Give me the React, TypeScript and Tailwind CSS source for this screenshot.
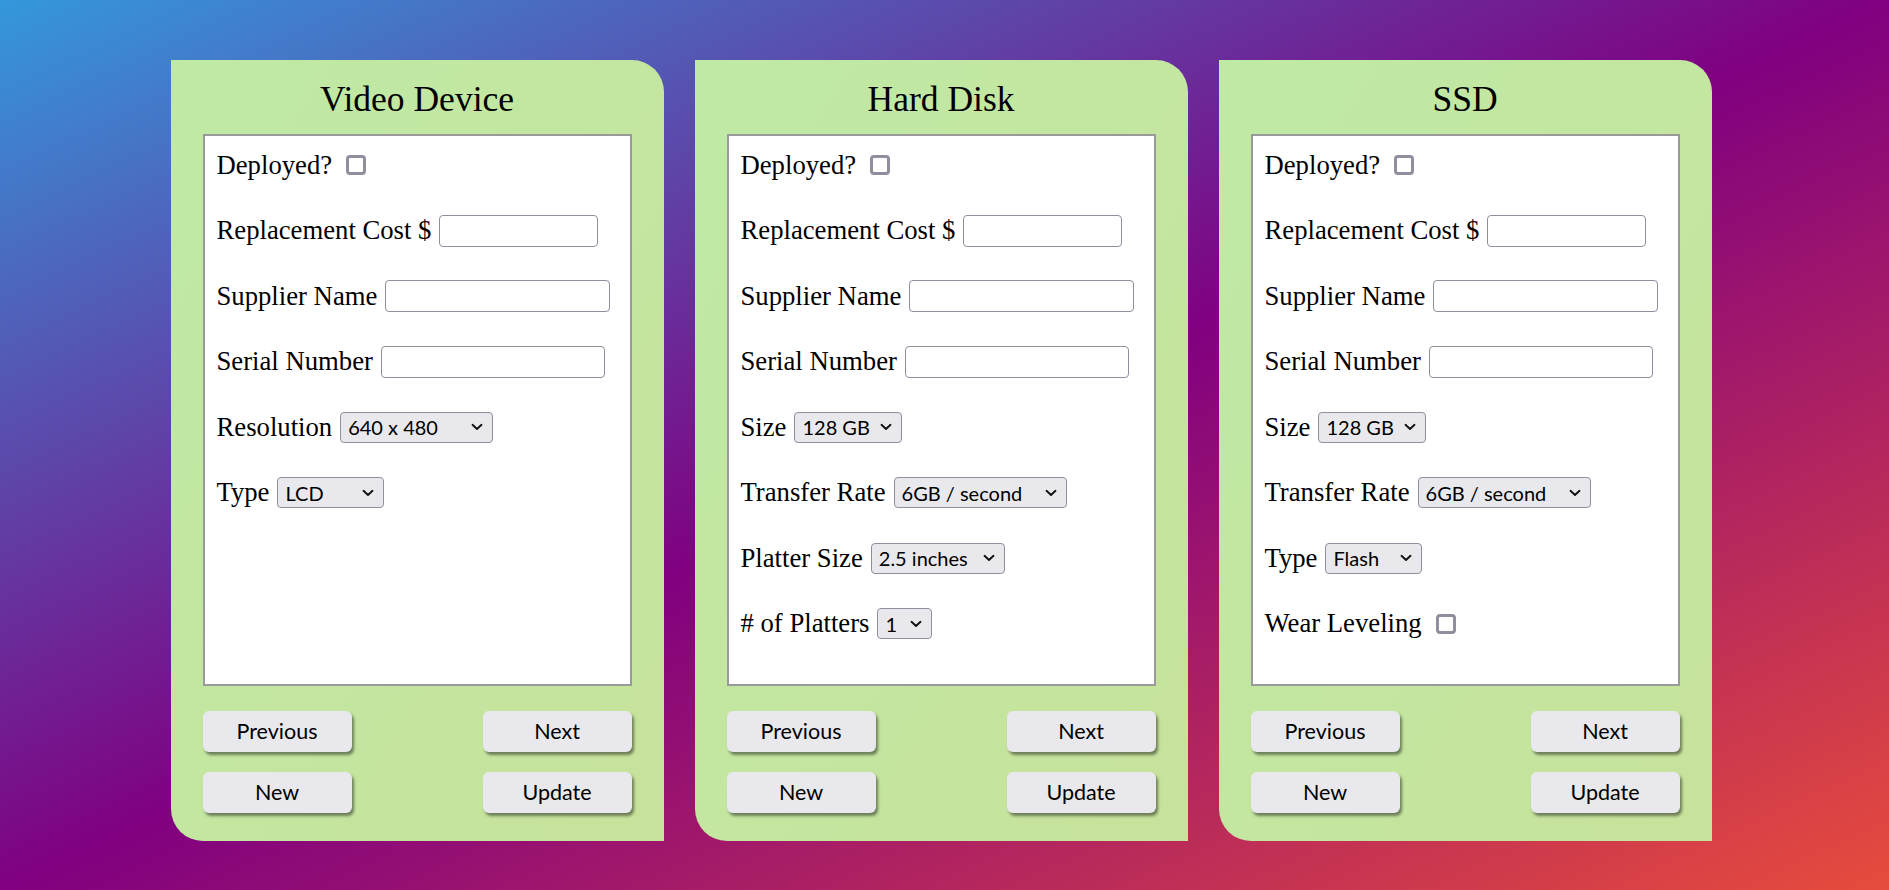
import { ReactNode } from "react";

type Field =
  | { kind: "check"; label: string }
  | { kind: "text"; label: string; width: number }
  | { kind: "select"; label: string; value: string; width: number };

type Card = { title: string; fields: Field[] };

const common: Field[] = [
  { kind: "check", label: "Deployed?" },
  { kind: "text", label: "Replacement Cost $", width: 159 },
  { kind: "text", label: "Supplier Name", width: 225 },
  { kind: "text", label: "Serial Number", width: 224 },
];

const cards: Card[] = [
  {
    title: "Video Device",
    fields: [
      ...common,
      { kind: "select", label: "Resolution", value: "640 x 480", width: 153 },
      { kind: "select", label: "Type", value: "LCD", width: 107 },
    ],
  },
  {
    title: "Hard Disk",
    fields: [
      ...common,
      { kind: "select", label: "Size", value: "128 GB", width: 108 },
      { kind: "select", label: "Transfer Rate", value: "6GB / second", width: 173 },
      { kind: "select", label: "Platter Size", value: "2.5 inches", width: 134 },
      { kind: "select", label: "# of Platters", value: "1", width: 55 },
    ],
  },
  {
    title: "SSD",
    fields: [
      ...common,
      { kind: "select", label: "Size", value: "128 GB", width: 108 },
      { kind: "select", label: "Transfer Rate", value: "6GB / second", width: 173 },
      { kind: "select", label: "Type", value: "Flash", width: 97 },
      { kind: "check", label: "Wear Leveling" },
    ],
  },
];

function Chevron() {
  return (
    <svg width="12" height="8" viewBox="0 0 12 8" className="pointer-events-none absolute right-[10px] top-1/2 -translate-y-1/2">
      <path d="M1.5 1.8 L6 6 L10.5 1.8" fill="none" stroke="#111" strokeWidth="1.9" strokeLinecap="round" strokeLinejoin="round" />
    </svg>
  );
}

function Row({ field }: { field: Field }) {
  let control: ReactNode = null;
  if (field.kind === "check") {
    control = (
      <span className="ml-[6px] shrink-0 block w-[20px] h-[20px] border-[3px] border-[#8f8f9d] rounded-[4px] bg-white" />
    );
  } else if (field.kind === "text") {
    control = (
      <input
        type="text"
        style={{ width: field.width }}
        className="h-[32px] border border-[#8f8f9d] rounded-[4px] bg-white"
      />
    );
  } else {
    control = (
      <div className="relative" style={{ width: field.width }}>
        <select
          defaultValue={field.value}
          className="w-full h-[31px] appearance-none bg-[#e9e9ed] border border-[#8f8f9d] rounded-[4px] pl-[7px] text-[20px] text-black font-['Lato',sans-serif] leading-none"
        >
          <option>{field.value}</option>
        </select>
        <Chevron />
      </div>
    );
  }
  return (
    <div className="h-[36px] flex items-center gap-[8px]">
      <span className="text-[26.7px] text-black whitespace-nowrap">{field.label}</span>
      {control}
    </div>
  );
}

function Btn({ children }: { children: ReactNode }) {
  return (
    <button className="w-[149px] h-[41px] bg-[#e9e9ed] rounded-[6px] shadow-[2px_3px_3px_rgba(0,0,0,0.45)] text-[21.5px] text-black font-['Lato',sans-serif]">
      {children}
    </button>
  );
}

function DeviceCard({ card }: { card: Card }) {
  return (
    <div className="w-[493px] h-[781px] px-[32px] flex flex-col bg-gradient-to-br from-[#bfeaa5] to-[#c7e29b] rounded-tr-[32px] rounded-bl-[32px]">
      <h1 className="h-[74px] pt-[20px] text-center text-[35.5px] leading-[39px] text-black">{card.title}</h1>
      <div className="h-[552px] bg-white border-2 border-[#9a9a9a] pt-[11px] px-[12px] flex flex-col gap-[29.5px]">
        {card.fields.map((f, i) => (
          <Row key={i} field={f} />
        ))}
      </div>
      <div className="mt-[25px] grid grid-cols-2 gap-y-[20px] justify-items-start">
        <Btn>Previous</Btn>
        <div className="justify-self-end"><Btn>Next</Btn></div>
        <Btn>New</Btn>
        <div className="justify-self-end"><Btn>Update</Btn></div>
      </div>
    </div>
  );
}

export default function App() {
  return (
    <main className="min-h-screen w-full bg-[linear-gradient(to_bottom_right,#3498db,#800080,#e74c3c)] font-['Liberation_Serif',serif] pt-[60px] pb-[49px] pr-[7px] flex justify-center gap-[31px]">
      {cards.map((c) => (
        <DeviceCard key={c.title} card={c} />
      ))}
    </main>
  );
}
